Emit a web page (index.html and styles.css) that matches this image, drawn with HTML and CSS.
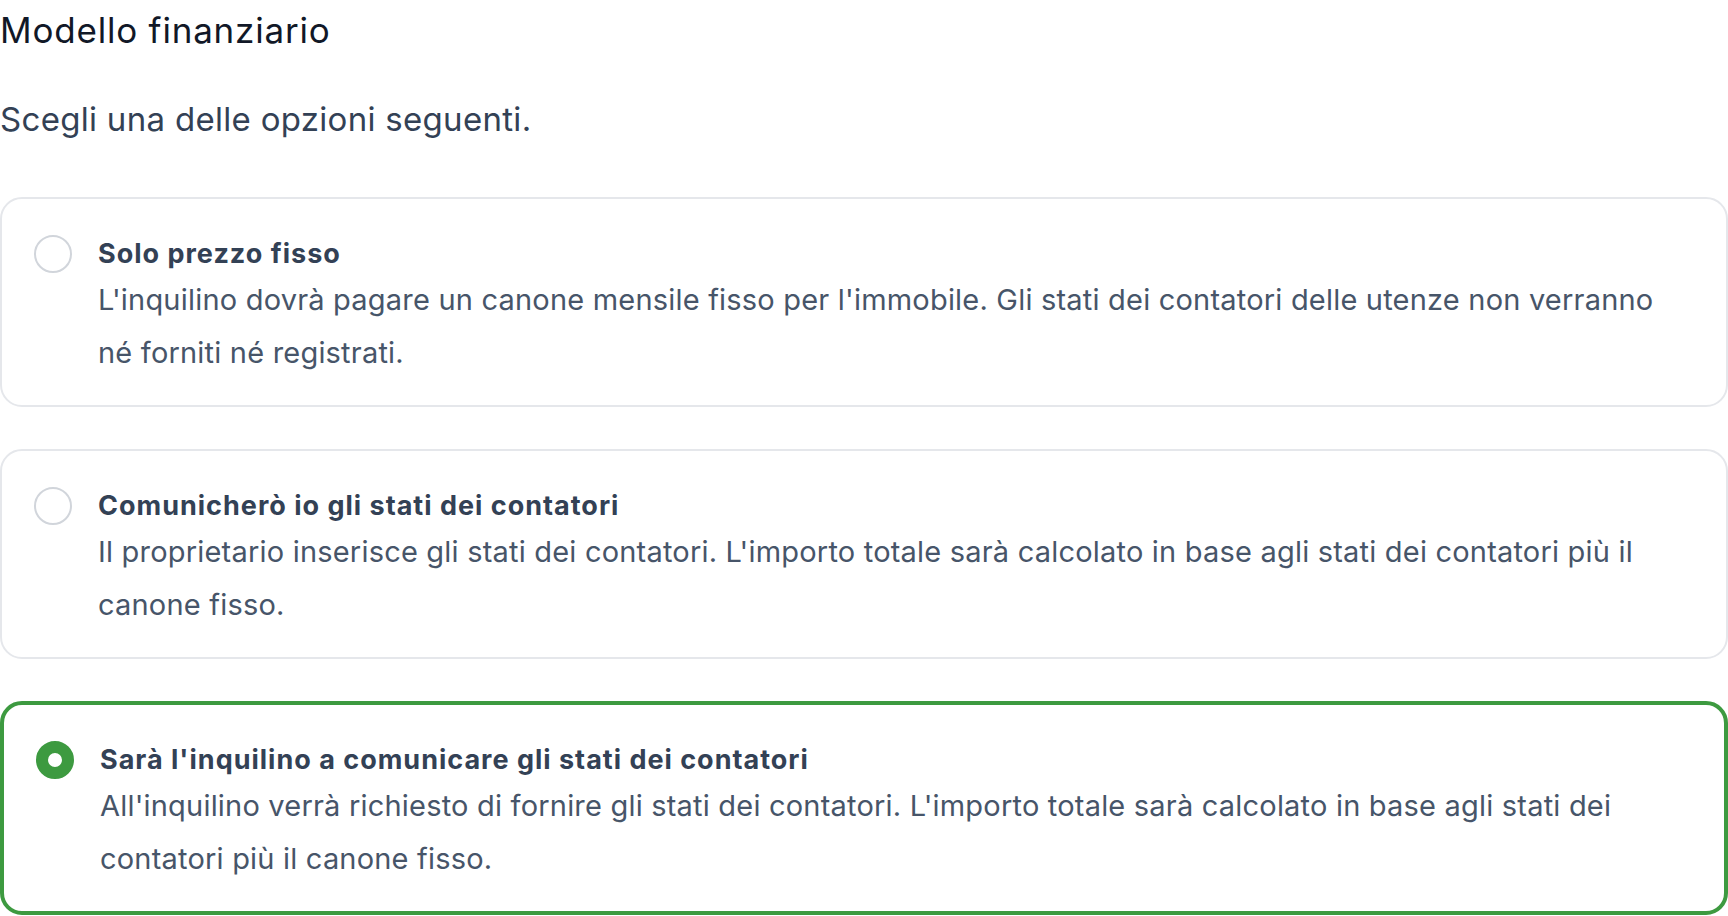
FILE: index.html
```html
<!DOCTYPE html>
<html lang="it">
<head>
    <meta charset="UTF-8">
    <meta name="viewport" content="width=device-width, initial-scale=1.0">
    <title>Modello finanziario</title>
    <link rel="stylesheet" href="styles.css">
</head>
<body>
    <main class="page">
        <h1 class="page-title">Modello finanziario</h1>
        <p class="page-lead">Scegli una delle opzioni seguenti.</p>

        <div class="options">
            <label class="option">
                <input type="radio" name="financialModel" class="option-radio">
                <span class="option-body">
                    <span class="option-title">Solo prezzo fisso</span>
                    <span class="option-text">L'inquilino dovrà pagare un canone mensile fisso per l'immobile. Gli stati dei contatori delle utenze non verranno né forniti né registrati.</span>
                </span>
            </label>

            <label class="option">
                <input type="radio" name="financialModel" class="option-radio">
                <span class="option-body">
                    <span class="option-title">Comunicherò io gli stati dei contatori</span>
                    <span class="option-text">Il proprietario inserisce gli stati dei contatori. L'importo totale sarà calcolato in base agli stati dei contatori più il canone fisso.</span>
                </span>
            </label>

            <label class="option is-selected">
                <input type="radio" name="financialModel" class="option-radio" checked>
                <span class="option-body">
                    <span class="option-title">Sarà l'inquilino a comunicare gli stati dei contatori</span>
                    <span class="option-text">All'inquilino verrà richiesto di fornire gli stati dei contatori. L'importo totale sarà calcolato in base agli stati dei contatori più il canone fisso.</span>
                </span>
            </label>
        </div>
    </main>
</body>
</html>
```

FILE: styles.css
```css
* {
    margin: 0;
    padding: 0;
    box-sizing: border-box;
    font-family: 'Inter', 'Noto Sans', sans-serif;
}

body {
    background-color: #ffffff;
}

.page {
    padding-top: 10px;
}

.page-title {
    font-size: 35px;
    line-height: 40px;
    font-weight: 400;
    letter-spacing: 0.8px;
    color: #111827;
}

.page-lead {
    margin-top: 49px;
    font-size: 33px;
    line-height: 40px;
    letter-spacing: 0.3px;
    color: #334155;
}

.options {
    margin-top: 58px;
    display: flex;
    flex-direction: column;
    gap: 42px;
}

.option {
    display: flex;
    align-items: flex-start;
    gap: 26px;
    padding: 36px 46px 26px 32px;
    border: 2px solid #e5e7eb;
    border-radius: 22px;
    background-color: #ffffff;
    cursor: pointer;
}

.option.is-selected {
    border: 4px solid #3d9a40;
}

.option-radio {
    appearance: none;
    flex: none;
    width: 38px;
    height: 38px;
    border: 2px solid #d1d5db;
    border-radius: 50%;
    background-color: #ffffff;
    cursor: pointer;
}

.option-radio:checked {
    border: 12px solid #3d9a40;
}

.option-body {
    display: flex;
    flex-direction: column;
}

.option-title {
    font-size: 27px;
    line-height: 38px;
    font-weight: 700;
    letter-spacing: 1px;
    color: #334155;
}

.option-text {
    font-size: 29px;
    line-height: 53px;
    letter-spacing: 0.2px;
    color: #475569;
}
```
